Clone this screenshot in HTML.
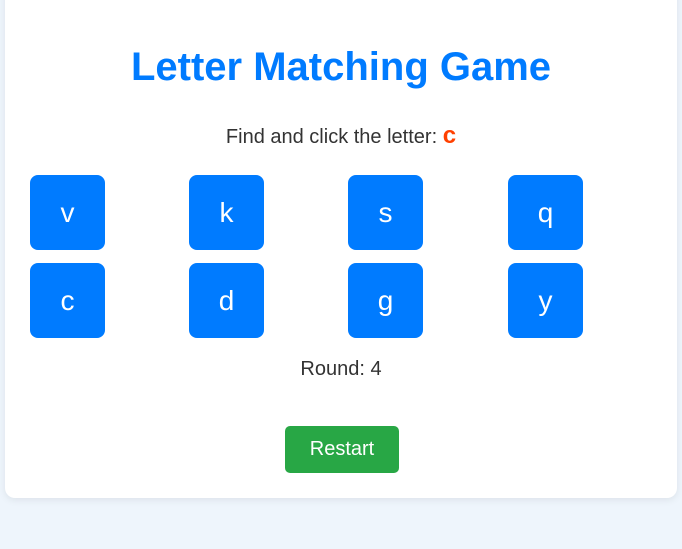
<!DOCTYPE html>
<html><head><style>
body{margin:0;width:682px;height:549px;background:#eef5fc;font-family:"Liberation Sans",Arial,sans-serif;overflow:hidden;position:relative}
.card{position:absolute;left:5px;top:-20px;width:672px;height:518px;background:#fff;border-radius:10px;box-shadow:0 2px 8px rgba(0,0,0,0.08)}
h1{position:absolute;left:5px;width:672px;top:45px;margin:0;text-align:center;color:#007bff;font-size:40px;font-weight:bold;line-height:44px}
.find{position:absolute;left:5px;width:672px;top:123px;text-align:center;font-size:20px;color:#333;line-height:26px}
.find b{color:#ff4000;font-size:24px}
.b{position:absolute;width:75px;height:75px;background:#007bff;border-radius:8px;color:#fff;font-size:28px;text-align:center;line-height:75px}
.round{position:absolute;left:5px;width:672px;top:357px;text-align:center;font-size:20px;color:#333;line-height:24px}
.r{position:absolute;left:285px;top:426px;width:114px;height:47px;background:#28a745;border-radius:5px;color:#fff;font-size:20px;text-align:center;line-height:46px}
</style></head><body>
<div class="card"></div>
<h1>Letter Matching Game</h1>
<div class="find">Find and click the letter: <b>c</b></div>
<div class="b" style="left:30px;top:175px">v</div>
<div class="b" style="left:189px;top:175px">k</div>
<div class="b" style="left:348px;top:175px">s</div>
<div class="b" style="left:508px;top:175px">q</div>
<div class="b" style="left:30px;top:263px">c</div>
<div class="b" style="left:189px;top:263px">d</div>
<div class="b" style="left:348px;top:263px">g</div>
<div class="b" style="left:508px;top:263px">y</div>
<div class="round">Round: 4</div>
<div class="r">Restart</div>
</body></html>
